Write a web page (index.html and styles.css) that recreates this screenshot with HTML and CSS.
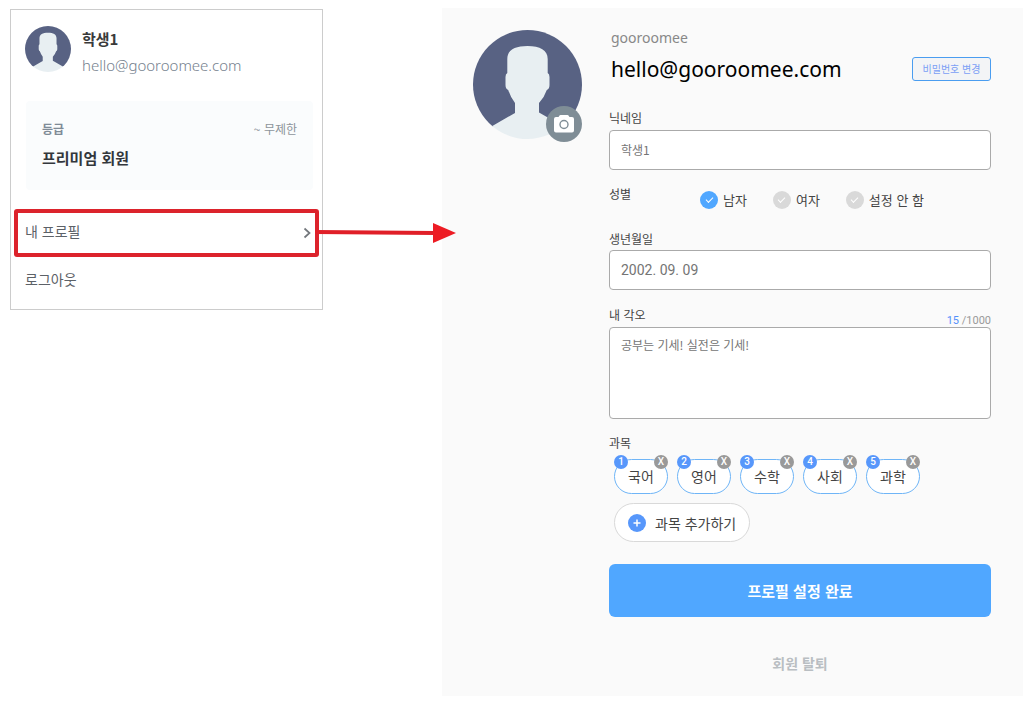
FILE: index.html
```html
<!DOCTYPE html>
<html lang="ko">
<head>
<meta charset="utf-8">
<meta name="viewport" content="width=device-width, initial-scale=1">
<title>내 프로필</title>
<link rel="stylesheet" href="styles.css">
</head>
<body>
<svg class="sprite" aria-hidden="true">
  <symbol id="person" viewBox="0 0 109 109">
    <clipPath id="disc"><circle cx="54.5" cy="54.5" r="54.5"/></clipPath>
    <g clip-path="url(#disc)">
      <rect width="109" height="96.500" fill="#586283"/>
      <path fill="#e8eff2" d="M34.300 43V29C34.300 20 42 16 54.500 16S74.700 20 74.700 29V43Q76.500 44 76.500 47V55Q76.500 59 73.800 60Q71.500 67 66 73V82.500L89.700 96L100 109H9L19.300 96L42 83V73Q37.500 67 35.200 60Q32.500 59 32.500 55V47Q32.500 44 34.300 43Z"/>
    </g>
  </symbol>
</svg>
<main class="page">
  <aside class="menu-card">
    <header class="user">
      <svg class="user-avatar" role="img" aria-label="프로필 사진"><use href="#person"/></svg>
      <div class="user-text">
        <strong class="user-name">학생1</strong>
        <span class="user-email">hello@gooroomee.com</span>
      </div>
    </header>
    <section class="plan">
      <div class="plan-row"><span class="plan-label">등급</span><span class="plan-term">~ 무제한</span></div>
      <strong class="plan-name">프리미엄 회원</strong>
    </section>
    <nav class="menu">
      <a class="menu-item menu-item-marked" href="#profile">
        <span>내 프로필</span>
        <svg class="chevron" viewBox="0 0 8 12" aria-hidden="true"><path d="M1.500 1.500L6.500 6L1.500 10.500" fill="none" stroke="#73777c" stroke-width="1.700"/></svg>
        <svg class="arrow" viewBox="0 0 141 20" aria-hidden="true"><path d="M0 9L120 10" stroke="#e01f28" stroke-width="4"/><path d="M118 0L141 10L118 20Z" fill="#ed1c24"/></svg>
      </a>
      <a class="menu-item" href="#logout">로그아웃</a>
    </nav>
  </aside>

  <section class="panel" id="profile">
    <div class="photo">
      <svg class="photo-avatar" role="img" aria-label="프로필 사진"><use href="#person"/></svg>
      <button class="photo-edit" type="button" aria-label="사진 변경">
        <svg viewBox="0 0 36 36" aria-hidden="true"><path fill="#fff" d="M12.500 11L13.500 9.500Q13.800 9 14.500 9H21.500Q22.200 9 22.500 9.500L23.500 11H26Q28 11 28 13V24.500Q28 26.500 26 26.500H10Q8 26.500 8 24.500V13Q8 11 10 11Z"/><circle cx="18" cy="18.500" r="4" fill="none" stroke="#7f8d96" stroke-width="1.400"/></svg>
      </button>
    </div>
    <form class="form">
      <p class="account">gooroomee</p>
      <div class="email-row">
        <span class="email">hello@gooroomee.com</span>
        <button class="password" type="button">비밀번호 변경</button>
      </div>

      <label class="label" for="nick">닉네임</label>
      <input class="input" id="nick" type="text" value="학생1">

      <div class="gender" role="radiogroup" aria-labelledby="gender-label">
        <span class="label gender-label" id="gender-label">성별</span>
        <div class="options">
          <label class="option"><input class="radio" type="radio" name="gender" checked>남자</label>
          <label class="option"><input class="radio" type="radio" name="gender">여자</label>
          <label class="option"><input class="radio" type="radio" name="gender">설정 안 함</label>
        </div>
      </div>

      <label class="label" for="birth">생년월일</label>
      <input class="input input-date" id="birth" type="text" value="2002. 09. 09">

      <div class="goal-head">
        <label class="label" for="goal">내 각오</label>
        <span class="counter"><span class="count">15</span> /1000</span>
      </div>
      <textarea class="textarea" id="goal">공부는 기세! 실전은 기세!</textarea>

      <span class="label subject-label" id="subject-label">과목</span>
      <ul class="subjects" aria-labelledby="subject-label">
        <li class="subject"><span class="badge order">1</span>국어<button class="badge remove" type="button" aria-label="국어 삭제">X</button></li>
        <li class="subject"><span class="badge order">2</span>영어<button class="badge remove" type="button" aria-label="영어 삭제">X</button></li>
        <li class="subject"><span class="badge order">3</span>수학<button class="badge remove" type="button" aria-label="수학 삭제">X</button></li>
        <li class="subject"><span class="badge order">4</span>사회<button class="badge remove" type="button" aria-label="사회 삭제">X</button></li>
        <li class="subject"><span class="badge order">5</span>과학<button class="badge remove" type="button" aria-label="과학 삭제">X</button></li>
      </ul>
      <button class="add" type="button">
        <svg class="add-icon" viewBox="0 0 18 18" aria-hidden="true"><circle cx="9" cy="9" r="9" fill="#5797fb"/><path d="M9 5.500V12.500M5.500 9H12.500" stroke="#fff" stroke-width="1.500"/></svg>
        과목 추가하기
      </button>

      <button class="submit" type="submit">프로필 설정 완료</button>
      <button class="withdraw" type="button">회원 탈퇴</button>
    </form>
  </section>
</main>
</body>
</html>
```
FILE: styles.css
```css
* {
  box-sizing: border-box;
}

body {
  margin: 0;
  background: #fff;
  color: #444;
  font-family: "Noto Sans CJK KR", sans-serif;
  font-size: 14px;
  line-height: 20px;
}

button,
input,
textarea {
  font: inherit;
  color: inherit;
}

button {
  padding: 0;
  border: 0;
  background: none;
  cursor: pointer;
}

.sprite {
  position: absolute;
  width: 0;
  height: 0;
}

.page {
  display: grid;
  grid-template-columns: 313fr 581fr;
  column-gap: 119px;
  align-items: start;
  padding: 8px 12px 14px 10px;
}

/* Account menu */

.menu-card {
  margin-top: 1px;
  padding-bottom: 13px;
  border: 1px solid #ccc;
}

.user {
  display: flex;
  gap: 11px;
  padding: 16px 14px 0;
}

.user-avatar {
  flex: none;
  width: 46px;
  height: 46px;
}

.user-text {
  display: flex;
  flex-direction: column;
  gap: 6px;
  padding-top: 3px;
}

.user-name {
  color: #3a3a3a;
  font-size: 15px;
  font-weight: 700;
}

.user-email {
  color: #75818e;
  font-family: "Noto Sans", sans-serif;
  font-size: 15px;
  font-weight: 300;
}

.plan {
  margin: 26px 9px 0 15px;
  padding: 18px 16px 22px;
  border-radius: 4px;
  background: #fafcfd;
}

.plan-row {
  display: flex;
  justify-content: space-between;
  font-size: 12px;
}

.plan-label {
  color: #7f8b97;
  font-weight: 700;
}

.plan-term {
  color: #8d949b;
}

.plan-name {
  display: block;
  margin-top: 9px;
  color: #33373c;
  font-size: 15px;
  font-weight: 700;
}

.menu {
  display: flex;
  flex-direction: column;
  padding: 19px 3px 0;
}

.menu-item {
  display: flex;
  align-items: center;
  height: 34px;
  padding: 0 11px;
  color: #5c6167;
  text-decoration: none;
}

.menu-item-marked {
  position: relative;
  justify-content: space-between;
  height: 48px;
  margin-bottom: 5px;
  padding: 0 4px 4px 7px;
  border: 4px solid #dc232c;
  border-radius: 3px;
}

.chevron {
  width: 8px;
  height: 12px;
  margin-top: 4px;
}

.arrow {
  position: absolute;
  top: 10px;
  left: 100%;
  width: 141px;
  height: 20px;
}

/* Profile panel */

.panel {
  display: flex;
  gap: 27px;
  padding: 20px 32px 23px 31px;
  background: #fafafa;
}

.photo {
  position: relative;
  flex: none;
  align-self: flex-start;
  margin-top: 2px;
}

.photo-avatar {
  display: block;
  width: 109px;
  height: 109px;
}

.photo-edit {
  position: absolute;
  right: 0;
  bottom: -3px;
  width: 36px;
  height: 36px;
  border-radius: 50%;
  background: #7f8d96;
}

.photo-edit svg {
  display: block;
}

.form {
  display: flex;
  flex: 1;
  flex-direction: column;
  min-width: 0;
}

.account {
  margin: 0;
  padding-left: 2px;
  color: #888;
  font-family: "Noto Sans", sans-serif;
}

.email-row {
  display: flex;
  align-items: center;
  justify-content: space-between;
  margin: 6px 0 24px;
  padding-left: 2px;
}

.email {
  color: #000;
  font-family: "Noto Sans", sans-serif;
  font-size: 21px;
  line-height: 30px;
}

.password {
  width: 79px;
  height: 24px;
  border: 1px solid #4a9df0;
  border-radius: 3px;
  background: #f3f4f6;
  color: #7b9ff5;
  font-size: 10px;
}

.label {
  font-size: 12px;
}

.input,
.textarea {
  width: 100%;
  border: 1px solid #aaa;
  border-radius: 4px;
  background: #fff;
  color: #747474;
  font-size: 12px;
}

.input {
  height: 40px;
  margin-top: 2px;
  padding: 0 11px 2px;
}

.input-date {
  margin-top: 1px;
  padding-bottom: 0;
  font-family: Roboto, sans-serif;
  font-size: 14px;
}

.gender {
  display: flex;
  margin: 14px 0 19px;
}

.gender-label {
  width: 91px;
}

.options {
  display: flex;
  gap: 26px;
  padding-top: 6px;
}

.option {
  display: flex;
  align-items: center;
  gap: 5px;
  font-size: 13px;
}

.radio {
  display: grid;
  place-items: center;
  width: 18px;
  height: 18px;
  margin: 0;
  border-radius: 50%;
  background: #d9d9d9;
  appearance: none;
}

.radio:checked {
  background: #50a7ff;
}

.radio::after {
  width: 6px;
  height: 3px;
  margin-bottom: 2px;
  border-bottom: 1px solid #fff;
  border-left: 1px solid #fff;
  content: "";
  transform: rotate(-45deg);
}

.goal-head {
  display: flex;
  justify-content: space-between;
  height: 22px;
  margin-top: 15px;
}

.counter {
  align-self: flex-end;
  color: #999;
  font-family: Roboto, sans-serif;
  font-size: 11px;
  line-height: 12px;
}

.count {
  color: #5490fa;
}

.textarea {
  display: block;
  height: 92px;
  padding: 8px 11px;
  line-height: 18px;
  resize: none;
}

.subject-label {
  margin-top: 14px;
}

.subjects {
  display: flex;
  flex-wrap: wrap;
  gap: 9px;
  margin: 6px 0 9px;
  padding: 0 0 0 5px;
  list-style: none;
}

.subject {
  position: relative;
  width: 54px;
  height: 35px;
  border: 1px solid #6fb5f7;
  border-radius: 18px;
  background: #fff;
  line-height: 32px;
  text-align: center;
}

.badge {
  position: absolute;
  top: -5px;
  width: 14px;
  height: 14px;
  border-radius: 50%;
  color: #fff;
  font-family: Roboto, sans-serif;
  font-size: 10px;
  font-weight: 500;
  line-height: 14px;
  text-align: center;
}

.order {
  left: -1px;
  background: #5797fb;
}

.remove {
  right: -1px;
  background: #999;
}

.add {
  display: flex;
  align-items: center;
  align-self: flex-start;
  gap: 9px;
  height: 39px;
  margin-left: 5px;
  padding: 0 13px;
  border: 1px solid #d9d9d9;
  border-radius: 20px;
  background: #fff;
}

.add-icon {
  width: 18px;
  height: 18px;
}

.submit {
  height: 53px;
  margin-top: 22px;
  border-radius: 6px;
  background: #50a7ff;
  color: #fff;
  font-size: 15px;
  font-weight: 700;
}

.withdraw {
  align-self: center;
  margin-top: 36px;
  color: #b9bec2;
  font-weight: 700;
}
```
